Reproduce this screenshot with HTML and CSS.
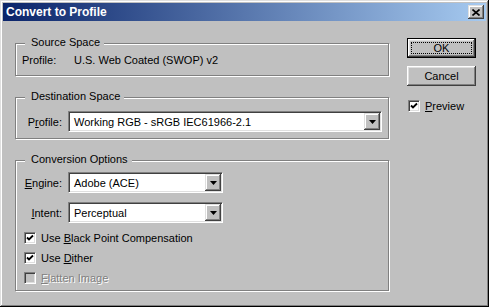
FILE: index.html
```html
<!doctype html>
<html>
  <head>
    <title>Convert to Profile</title>
    <meta name="viewport" content="width=device-width, initial-scale=1">
    <link rel="stylesheet" href="styles.css">
  </head>
  <body>
    <div class="window">
      <header class="titlebar">
        <span class="title">Convert to Profile</span>
        <button class="close">
          <svg width="8" height="7" viewBox="0 0 8 7">
            <path d="M0.5 0.5l7 6M7.5 0.5l-7 6" stroke="#000" stroke-width="1.6" fill="none" />
          </svg>
        </button>
      </header>

      <div class="dialog">
        <div class="groups">
          <section class="group source">
            <div class="legend">Source Space</div>
            <div class="source-row">
              <span class="source-label">Profile:</span>
              <span>U.S. Web Coated (SWOP) v2</span>
            </div>
          </section>

          <section class="group destination">
            <div class="legend">Destination Space</div>
            <div class="field first-field">
              <span class="field-label">P<u>r</u>ofile:</span>
              <div class="select wide">
                <span class="select-value">Working RGB - sRGB IEC61966-2.1</span>
                <span class="arrow"><svg width="7" height="4" viewBox="0 0 7 4"><path d="M0 0h7L3.5 4z" /></svg></span>
              </div>
            </div>
          </section>

          <section class="group options">
            <div class="legend">Conversion Options</div>
            <div class="field engine-field">
              <span class="field-label"><u>E</u>ngine:</span>
              <div class="select narrow">
                <span class="select-value">Adobe (ACE)</span>
                <span class="arrow"><svg width="7" height="4" viewBox="0 0 7 4"><path d="M0 0h7L3.5 4z" /></svg></span>
              </div>
            </div>
            <div class="field intent-field">
              <span class="field-label"><u>I</u>ntent:</span>
              <div class="select narrow">
                <span class="select-value">Perceptual</span>
                <span class="arrow"><svg width="7" height="4" viewBox="0 0 7 4"><path d="M0 0h7L3.5 4z" /></svg></span>
              </div>
            </div>
            <div class="checks">
              <label class="check-row">
                <span class="check"><svg width="8" height="8" viewBox="0 0 8 8"><path d="M1 3.5l2 2l4-4" stroke="#000" stroke-width="1.8" fill="none" /></svg></span>
                <span>Use <u>B</u>lack Point Compensation</span>
              </label>
              <label class="check-row">
                <span class="check"><svg width="8" height="8" viewBox="0 0 8 8"><path d="M1 3.5l2 2l4-4" stroke="#000" stroke-width="1.8" fill="none" /></svg></span>
                <span>Use <u>D</u>ither</span>
              </label>
              <label class="check-row disabled">
                <span class="check"></span>
                <span><u>F</u>latten Image</span>
              </label>
            </div>
          </section>
        </div>

        <div class="side">
          <button class="btn default"><span class="btn-face">OK</span></button>
          <button class="btn cancel"><span class="btn-face">Cancel</span></button>
          <label class="check-row preview">
            <span class="check"><svg width="8" height="8" viewBox="0 0 8 8"><path d="M1 3.5l2 2l4-4" stroke="#000" stroke-width="1.8" fill="none" /></svg></span>
            <span><u>P</u>review</span>
          </label>
        </div>
      </div>
    </div>
  </body>
</html>
```

FILE: styles.css
```css
* {
  box-sizing: border-box;
}

html, body {
  margin: 0;
  padding: 0;
  width: 100%;
  height: 100%;
  overflow: hidden;
}

body {
  font-family: "Liberation Sans", Arial, sans-serif;
  font-size: 11px;
  color: #000;
  background: #c0c0c0;
}

u {
  text-decoration-thickness: 1px;
  text-underline-offset: 1px;
}

.window {
  width: 489px;
  height: 307px;
  padding: 3px;

  background: #c0c0c0;
  box-shadow: inset -1px -1px #000, inset 1px 1px #dfdfdf, inset -2px -2px #808080, inset 2px 2px #fff;

  display: flex;
  flex-direction: column;
}

.titlebar {
  height: 18px;
  padding-left: 3px;

  background: linear-gradient(to right, #0a246a, #a6caf0);
  color: #fff;
  font-size: 12px;
  font-weight: bold;

  display: flex;
  align-items: center;
}

.close {
  margin-left: auto;
  margin-right: 2px;
  width: 16px;
  height: 14px;
  padding: 0;

  border: none;
  background: #c0c0c0;
  box-shadow: inset -1px -1px #404040, inset 1px 1px #dfdfdf, inset -2px -2px #808080, inset 2px 2px #fff;

  display: flex;
  align-items: center;
  justify-content: center;
}

.dialog {
  flex: 1;
  display: flex;
}

.groups {
  width: 386px;
  padding-left: 12px;
}

/* etched group box */
.group {
  border: 1px solid #808080;
  box-shadow: 1px 1px 0 #fff, inset 1px 1px 0 #fff;
  padding: 0 6px;
}

.legend {
  display: table;
  margin: -9px 0 0 3px;
  padding: 0 4px 0 6px;
  line-height: 14px;
  background: #c0c0c0;
}

.source {
  margin-top: 22px;
  padding-bottom: 8px;
}

.source-row {
  margin-top: 4px;
  line-height: 14px;
  display: flex;
}

.source-label {
  width: 52px;
}

.destination {
  margin-top: 21px;
  padding-bottom: 6px;
}

.options {
  margin-top: 21px;
  padding-bottom: 2px;
}

.field {
  display: flex;
  align-items: center;
}

.first-field {
  margin-top: 8px;
}

.engine-field {
  margin-top: 6px;
}

.intent-field {
  margin-top: 9px;
}

.field-label {
  width: 40px;
  margin-right: 6px;
  text-align: right;
  white-space: nowrap;
}

.select {
  height: 21px;
  padding: 1px;

  background: #fff;
  border: 1px solid;
  border-color: #808080 #fff #fff #808080;
  box-shadow: inset 1px 1px #404040, inset -1px -1px #dfdfdf;

  display: flex;
  align-items: center;
}

.select.wide {
  flex: 1;
}

.select.narrow {
  width: 155px;
}

.select-value {
  padding-left: 4px;
  white-space: nowrap;
}

.arrow {
  width: 16px;
  height: 17px;
  margin-left: auto;

  background: #c0c0c0;
  box-shadow: inset -1px -1px #404040, inset 1px 1px #dfdfdf, inset -2px -2px #808080, inset 2px 2px #fff;

  display: flex;
  align-items: center;
  justify-content: center;
}

.checks {
  margin-top: 5px;
}

.check-row {
  height: 20px;
  padding-left: 2px;

  display: flex;
  align-items: center;
  gap: 5px;
  white-space: nowrap;
}

.check {
  width: 12px;
  height: 12px;

  background: #fff;
  border: 1px solid;
  border-color: #808080 #fff #fff #808080;
  box-shadow: inset 1px 1px #404040, inset -1px -1px #dfdfdf;

  display: flex;
  align-items: center;
  justify-content: center;
}

.check-row.disabled {
  color: #808080;
  text-shadow: 1px 1px 0 #fff;
}

.check-row.disabled .check {
  background: #c0c0c0;
}

.side {
  width: 69px;
  margin-left: 18px;

  display: flex;
  flex-direction: column;
}

.btn {
  width: 69px;
  height: 20px;
  padding: 0;

  font: inherit;
  color: #000;
  border: none;
  background: #c0c0c0;
  box-shadow: inset -1px -1px #404040, inset 1px 1px #fff, inset -2px -2px #808080, inset 2px 2px #dfdfdf;

  display: flex;
}

.btn-face {
  flex: 1;
  display: flex;
  align-items: center;
  justify-content: center;
}

.btn.default {
  margin-top: 17px;
  border: 1px solid #000;
}

.btn.default .btn-face {
  margin: 3px;
  border: 1px dotted #000;
}

.btn.cancel {
  margin-top: 8px;
}

.check-row.preview {
  margin-top: 10px;
  padding-left: 1px;
}
```
